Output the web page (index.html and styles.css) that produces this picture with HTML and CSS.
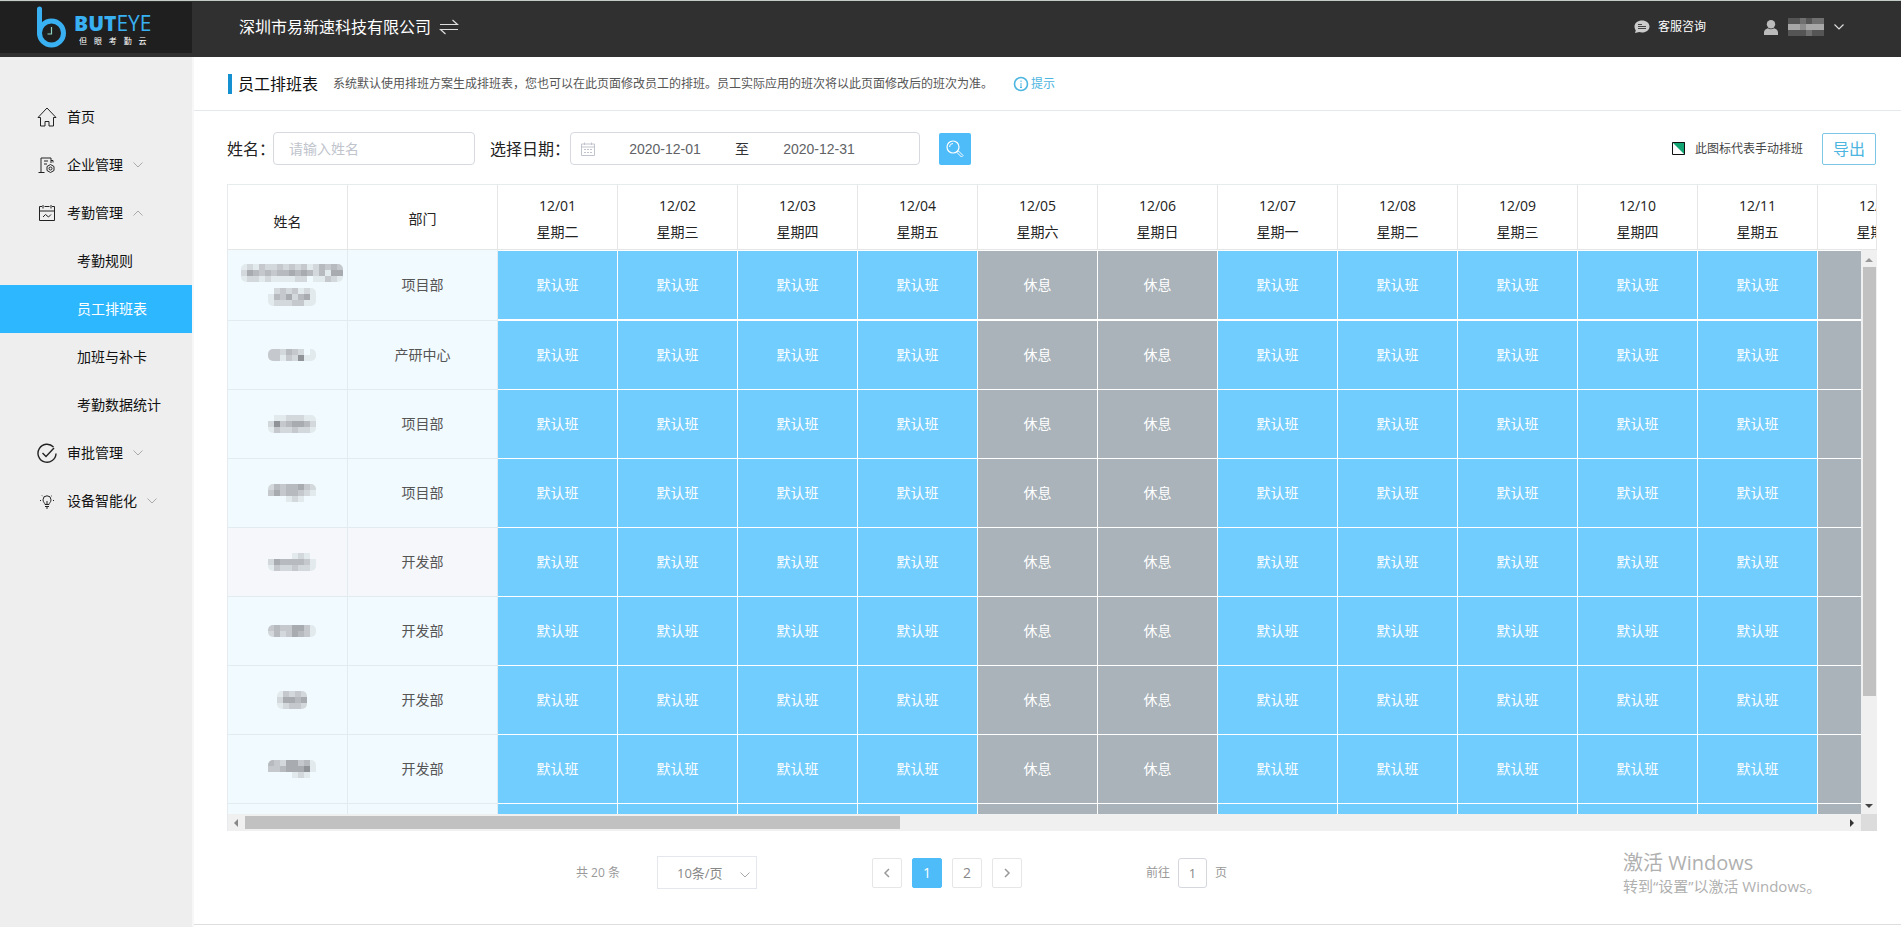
FILE: index.html
```html
<!DOCTYPE html>
<html lang="zh-CN">
<head>
<meta charset="utf-8">
<title>员工排班表</title>
<link rel="stylesheet" href="styles.css">
</head>
<body>
<header class="topbar">
  <div class="brand">
    <svg class="brand-mark" viewBox="0 0 30 42" aria-hidden="true">
      <path d="M2.5 3v24" fill="none" stroke="#38b0f2" stroke-width="5" stroke-linecap="round"/>
      <circle cx="14.500" cy="27" r="12" fill="none" stroke="#38b0f2" stroke-width="5"/>
      <path d="M14.500 21v7h-4" fill="none" stroke="#8fd3c0" stroke-width="1.200"/>
    </svg>
    <div class="brand-text">
      <div class="brand-name"><b>BUT</b>EYE</div>
      <div class="brand-sub"><span>但</span><span>眼</span><span>考</span><span>勤</span><span>云</span></div>
    </div>
  </div>
  <div class="company">
    <span>深圳市易新速科技有限公司</span>
    <button class="plain" aria-label="切换公司">
      <svg width="20" height="16" viewBox="0 0 20 16" fill="none" stroke="#ddd" stroke-width="1.200"><path d="M1 5.500h17.500L13.500 1M19 10.500H1.500l5 4.500"/></svg>
    </button>
  </div>
  <a class="service" href="#">
    <svg width="16" height="14" viewBox="0 0 16 14"><path d="M8 .5c4.300 0 7.500 2.600 7.500 6s-3.200 6-7.500 6c-1 0-2-.1-2.900-.4L1 13l.8-2.600C1 9.300.5 8 .5 6.500c0-3.400 3.200-6 7.500-6z" fill="#ccc"/><path d="M4 4.500h4M4 6.500h8M4 8.500h8" stroke="#444" stroke-width="1"/></svg>
    <span>客服咨询</span>
  </a>
  <button class="plain user" aria-label="用户菜单">
    <svg width="14" height="15" viewBox="0 0 14 15" fill="#bbb"><circle cx="7" cy="4.200" r="4.200"/><path d="M0 15v-2.500C0 10.300 1.700 9 3.800 8.300c2 1.300 4.400 1.300 6.400 0C12.300 9 14 10.300 14 12.500V15z"/></svg>
    <svg class="user-name" width="36" height="18" viewBox="0 0 36 18"><path fill="#555" d="M0 0h36v18H0z"/><path fill="#707070" d="M12 0h6v6h-6zM24 0h12v6H24zM18 12h6v6h-6z"/><path fill="#a8a8a8" d="M0 6h12v6H0zM18 6h18v6H18z"/><path fill="#8c8c8c" d="M12 6h6v6h-6z"/></svg>
    <svg width="10" height="6" viewBox="0 0 10 6" fill="none" stroke="#ddd" stroke-width="1.200"><path d="M.5.5 5 5 9.500.5"/></svg>
  </button>
</header>

<div class="layout">
  <nav class="sidebar">
    <a class="menu" href="#">
      <svg class="menu-icon" viewBox="0 0 20 20"><path d="M1 10.500 10 1l9 9.500h-2.500V19H12v-4.500H8V19H3.500v-8.500z"/></svg>
      <span>首页</span>
    </a>
    <a class="menu" href="#">
      <svg class="menu-icon" viewBox="0 0 20 20"><path d="M1.500 17.500h6M4 17.500V3h10v5M14 5.500h2v2M7 6h4M7 9h3"/><path d="M13.500 9.500l3.500 2v4l-3.500 2-3.500-2v-4z"/><circle cx="13.500" cy="13.500" r="1.500"/></svg>
      <span>企业管理</span>
      <svg class="caret" viewBox="0 0 10 6"><path d="M.5.5 5 5 9.500.5"/></svg>
    </a>
    <a class="menu" href="#">
      <svg class="menu-icon" viewBox="0 0 20 20"><path d="M5 3.500H2.500v14h15v-14H15M7.500 3.500h5M6 2v3.500M14 2v3.500M2.500 8h15M6 14l2.500-2.500 3 2.500 2.500-2.500"/></svg>
      <span>考勤管理</span>
      <svg class="caret" viewBox="0 0 10 6"><path d="M.5 5.500 5 1l4.500 4.500"/></svg>
    </a>
    <a class="menu sub" href="#">考勤规则</a>
    <a class="menu sub active" href="#">员工排班表</a>
    <a class="menu sub" href="#">加班与补卡</a>
    <a class="menu sub" href="#">考勤数据统计</a>
    <a class="menu" href="#">
      <svg class="menu-icon" viewBox="0 0 20 20"><path d="M16.500 4A9 9 0 1 0 19 10.500M5.500 10l3.500 3.500L17 5" stroke-width="1.400"/></svg>
      <span>审批管理</span>
      <svg class="caret" viewBox="0 0 10 6"><path d="M.5.5 5 5 9.500.5"/></svg>
    </a>
    <a class="menu" href="#">
      <svg class="menu-icon" viewBox="0 0 20 20"><path d="M8 13.500c0-1.500-2-2.300-2-4.700a4 4 0 0 1 8 0c0 2.400-2 3.200-2 4.700zM8 15.500h4M9 17h2M3 9.500h1M16 9.500h1M5 4.500l.7.700M15 4.500l-.7.700M10 10v3"/></svg>
      <span>设备智能化</span>
      <svg class="caret" viewBox="0 0 10 6"><path d="M.5.5 5 5 9.500.5"/></svg>
    </a>
  </nav>

  <main class="page">
    <div class="page-head">
      <h1>员工排班表</h1>
      <p>系统默认使用排班方案生成排班表，您也可以在此页面修改员工的排班。员工实际应用的班次将以此页面修改后的班次为准。</p>
      <a class="tip" href="#">
        <svg width="16" height="16" viewBox="0 0 16 16" fill="none" stroke="#4cb5e0"><circle cx="8" cy="8" r="6.500" stroke-width="1.600"/><path d="M8 4.500V6M8 7v4.500M7 11.500h2"/></svg>
        <span>提示</span>
      </a>
    </div>

    <form class="filters">
      <label for="name">姓名：</label>
      <input class="name-input" id="name" type="text" placeholder="请输入姓名">
      <label class="date-label" for="from">选择日期：</label>
      <div class="date-range">
        <svg width="14" height="14" viewBox="0 0 14 14" fill="none" stroke="#c0c4cc"><path d="M.5 2h13v11.500H.5zM.5 5h13M3.500.5V3M10.500.5V3M3 7.500h2M6 7.500h2M9 7.500h2M3 10.500h2M6 10.500h2M9 10.500h2"/></svg>
        <input id="from" type="text" value="2020-12-01">
        <span>至</span>
        <input type="text" value="2020-12-31" aria-label="结束日期">
      </div>
      <button class="search" type="button" aria-label="搜索">
        <svg width="18" height="18" viewBox="0 0 18 18" fill="none" stroke="#fff"><circle cx="7" cy="7" r="6" stroke-width="1.200"/><path d="M3.500 7A3.500 3.500 0 0 1 7 3.500"/><path d="M11 12.500l1.500-1.500 4.500 4.500-1.500 1.500z"/></svg>
      </button>
      <div class="legend">
        <svg width="13" height="13" viewBox="0 0 13 13"><path fill="#fff" d="M0 0h13v13H0z"/><path fill="#12a573" d="M0 0h13v13z"/><path fill="none" stroke="#111" d="M.5.5h12v12H.5z"/></svg>
        <span>此图标代表手动排班</span>
      </div>
      <button class="export" type="button">导出</button>
    </form>

    <section class="grid">
      <div class="grid-head"><table class="schedule"><thead><tr id="days"></tr></thead></table></div>
      <div class="grid-body"><table class="schedule"><tbody id="rows"></tbody></table></div>
      <div class="vbar">
        <svg width="8" height="5" viewBox="0 0 8 5"><path fill="#999" d="M0 5l4-4 4 4z"/></svg>
        <div class="vtrack"><div class="vthumb"></div></div>
        <svg width="8" height="5" viewBox="0 0 8 5"><path fill="#444" d="M0 0l4 4 4-4z"/></svg>
      </div>
      <div class="hbar">
        <svg width="5" height="8" viewBox="0 0 5 8"><path fill="#888" d="M5 0L1 4l4 4z"/></svg>
        <div class="htrack"><div class="hthumb"></div></div>
        <svg width="5" height="8" viewBox="0 0 5 8"><path fill="#333" d="M0 0l4 4-4 4z"/></svg>
      </div>
      <div class="corner"></div>
    </section>

    <footer class="pager">
      <span class="total">共 20 条</span>
      <div class="size">
        <select aria-label="每页条数"><option>10条/页</option></select>
        <svg class="caret" viewBox="0 0 10 6"><path d="M.5.5 5 5 9.500.5"/></svg>
      </div>
      <div class="pages">
        <button aria-label="上一页"><svg width="8" height="10" viewBox="0 0 8 10"><path d="M6 1 2 5l4 4"/></svg></button>
        <button class="current">1</button>
        <button>2</button>
        <button aria-label="下一页"><svg width="8" height="10" viewBox="0 0 8 10"><path d="M2 1l4 4-4 4"/></svg></button>
      </div>
      <div class="jump">
        <label for="jump">前往</label>
        <input id="jump" type="text" value="1">
        <span>页</span>
      </div>
    </footer>
  </main>
</div>

<aside class="watermark">
  <div class="watermark-title">激活 Windows</div>
  <div>转到“设置”以激活 Windows。</div>
</aside>
<script src="schedule.js"></script>
</body>
</html>
```
FILE: styles.css
```css
* { box-sizing: border-box; }

body {
  margin: 0;
  height: 100vh;
  display: flex;
  flex-direction: column;
  overflow: hidden;
  background: #fff;
  color: #303133;
  font: 14px/20px "Open Sans", "Noto Sans CJK SC", sans-serif;
}

a { color: inherit; text-decoration: none; }
svg { flex: none; }
button, input, select { font: inherit; margin: 0; }
input { min-width: 0; outline: none; }

.plain {
  display: flex;
  align-items: center;
  padding: 0;
  border: 0;
  background: none;
}

/* top bar */
.topbar {
  display: flex;
  align-items: center;
  height: 57px;
  padding: 0 57px 4px 0;
  border-top: 1px solid #c4ccc8;
  background: #303030;
  color: #fff;
}

.brand {
  display: flex;
  align-items: center;
  gap: 7px;
  width: 192px;
  height: 51px;
  padding-left: 37px;
  background: #1f1f1f;
}

.brand-mark { width: 30px; height: 42px; }
.brand-text { display: flex; flex-direction: column; gap: 2px; padding-top: 4px; }
.brand-name { font: 21px/22px "Open Sans", sans-serif; color: #38b0f2; }
.brand-name b { font-weight: 800; }
.brand-sub { display: flex; justify-content: space-between; padding: 0 5px; font-size: 8px; line-height: 10px; }

.company {
  display: flex;
  align-items: center;
  gap: 8px;
  margin-right: auto;
  padding-left: 47px;
  font-size: 16px;
}

.service { display: flex; align-items: center; gap: 8px; font-size: 12px; }
.user { gap: 10px; margin-left: 58px; }

/* sidebar */
.layout { display: flex; flex: 1; min-height: 0; }

.sidebar {
  width: 194px;
  flex: none;
  padding-top: 36px;
  background: #eee;
  border-right: 2px solid #f7f7f7;
}

.menu {
  display: flex;
  align-items: center;
  height: 48px;
  padding-left: 37px;
  color: #111;
}

.menu span { margin: 0 10px; }
.sub { padding-left: 77px; }
.active { background: #2db7ff; color: #fff; }
.menu-icon { width: 20px; height: 20px; fill: none; stroke: #222; }
.caret { width: 10px; height: 6px; fill: none; stroke: #aaa; }

/* page */
.page {
  display: flex;
  flex-direction: column;
  flex: 1;
  min-width: 0;
  margin-bottom: 2px;
  border-bottom: 1px solid #ddd;
}

.page-head {
  display: flex;
  align-items: center;
  height: 54px;
  padding-left: 34px;
  border-bottom: 1px solid #e4e9ec;
}

h1 {
  margin: 0;
  padding-left: 6px;
  border-left: 4px solid #1590d0;
  font-size: 16px;
  font-weight: 400;
  line-height: 20px;
  color: #111;
}

.page-head p { margin: 0 20px 0 15px; font-size: 12px; color: #555; }
.tip { display: flex; align-items: center; gap: 2px; font-size: 12px; color: #4cb5e0; }

.filters {
  display: flex;
  align-items: center;
  height: 73px;
  padding: 2px 25px 0 33px;
}

.filters label { font-size: 16px; color: #222; }

.name-input, .date-range {
  height: 33px;
  border: 1px solid #d6d9e0;
  border-radius: 4px;
  background: #fff;
}

.name-input { width: 202px; padding: 0 15px; margin-left: -2px; }
.name-input::placeholder { color: #c0c4cc; }
.date-label { margin-left: 15px; }

.date-range {
  display: flex;
  align-items: center;
  width: 350px;
  padding: 0 30px 0 10px;
}

.date-range input {
  flex: 1;
  border: 0;
  padding: 0;
  text-align: center;
  font-family: "Liberation Sans", sans-serif;
  color: #606266;
}

.search {
  display: flex;
  align-items: center;
  justify-content: center;
  width: 32px;
  height: 32px;
  margin-left: 19px;
  padding: 0;
  border: 0;
  border-radius: 2px;
  background: #4ebcf8;
}

.legend {
  display: flex;
  align-items: center;
  gap: 10px;
  margin: 0 19px 0 auto;
  font-size: 12px;
  color: #444;
}

.export {
  width: 54px;
  height: 32px;
  padding: 0;
  border: 1px solid #7cc6e8;
  border-radius: 2px;
  background: #fff;
  font-size: 16px;
  color: #4cb5e0;
}

/* schedule grid */
.grid {
  display: grid;
  grid-template-columns: 1fr 16px;
  grid-template-rows: auto 1fr 17px;
  flex: 1;
  min-height: 0;
  margin: 0 24px 0 33px;
  border: 1px solid #e6ebee;
  border-width: 1px 0 0 1px;
}

.grid-head { grid-column: 1 / 3; overflow: hidden; border-right: 1px solid #e6e6e6; }
.grid-body { overflow: hidden; }

.schedule { width: 1710px; table-layout: fixed; border-collapse: separate; border-spacing: 0; }

.schedule th, .schedule td {
  width: 120px;
  height: 69px;
  padding: 0;
  border: 1px solid #e2ecf0;
  border-width: 0 1px 1px 0;
  text-align: center;
  vertical-align: middle;
  font-weight: 400;
}

.schedule th { height: 65px; padding-top: 4px; line-height: 26px; color: #222; border-color: #e6e6e6; }
.schedule th:first-child { padding-top: 10px; }
.schedule .dept { width: 150px; }
.schedule td { background: #f1faff; color: #555; }
.schedule td:first-child { padding-left: 8px; }
.schedule .hovered td { background: #f5f7fa; }
.schedule td.work, .schedule .hovered td.work { background: #72cdff; border-color: #fff; color: #fff; }
.schedule td.rest, .schedule .hovered td.rest { background: #a9b3b9; border-color: #fff; color: #fff; }
.schedule tr:first-child td { height: 71px; }
.schedule tr:first-child .work, .schedule tr:first-child .rest { border-top: 1px solid #fff; border-bottom-width: 2px; }
.mask { display: block; margin: 0 auto; border-radius: 5px; }
.mask + .mask { margin-top: 6px; }

.vbar, .hbar { display: flex; align-items: center; background: #f0f0f0; }
.vbar { flex-direction: column; padding: 7px 0 5px; }
.vtrack { flex: 1; width: 13px; margin: 5px 0 7px; }
.vthumb { height: 81%; background: #c1c1c1; }
.hbar { padding: 0 6px 0 5px; }
.htrack { flex: 1; height: 13px; margin: 0 7px; }
.hthumb { width: 41%; height: 13px; background: #c1c1c1; }
.corner { background: #dcdcdc; }

/* pagination */
.pager {
  display: flex;
  align-items: center;
  height: 93px;
  padding: 0 0 10px 382px;
  font-size: 12px;
  color: #999;
}

.size { position: relative; margin-left: 37px; }

.size select {
  appearance: none;
  display: block;
  width: 100px;
  height: 33px;
  padding: 0 19px;
  border: 1px solid #e4e7ed;
  border-radius: 0;
  background: #fff;
  font-size: 13px;
  color: #888;
}

.size .caret { position: absolute; right: 7px; top: 16px; }

.pages { display: flex; gap: 10px; margin-left: 115px; }

.pages button {
  display: flex;
  align-items: center;
  justify-content: center;
  width: 30px;
  height: 30px;
  padding: 0;
  border: 1px solid #e6e6e6;
  border-radius: 2px;
  background: #fff;
  font-size: 14px;
  color: #888;
}

.pages svg { fill: none; stroke: #999; stroke-width: 1.5; }
.pages .current { border-color: #4ebcf8; background: #4ebcf8; color: #fff; }

.jump { display: flex; align-items: center; gap: 8px; margin-left: 124px; }

.jump input {
  width: 29px;
  height: 30px;
  padding: 0;
  border: 1px solid #d4d7de;
  border-radius: 3px;
  text-align: center;
  font-size: 13px;
  color: #888;
}

.watermark {
  position: absolute;
  right: 78px;
  bottom: 31px;
  width: 200px;
  white-space: nowrap;
  font-size: 15px;
  color: #b0b0b0;
  pointer-events: none;
}

.watermark-title { font-size: 20px; line-height: 27px; }
```
FILE: schedule.js
```javascript
const weekdays = ["二", "三", "四", "五", "六", "日", "一"];
const dayCount = 12;
const isRest = (i) => i % 7 === 4 || i % 7 === 5;

// Each name is hidden by a mosaic; digits run from 0 (clear) to 6 (darkest).
const staff = [
  { dept: "项目部", masks: ["12132232323124343/25434344545424155/12212111122011321", "02323121/14352451/12223311"] },
  { dept: "产研中心", masks: ["33243201/33132611"] },
  { dept: "项目部", masks: ["01122211/26345542/13223221"] },
  { dept: "项目部", masks: ["24344532/35344321/00012100"] },
  { dept: "开发部", hovered: true, masks: ["00001210/25444431/13223221"] },
  { dept: "开发部", masks: ["34335531/24235431"] },
  { dept: "开发部", masks: ["13232/25545/12332"] },
  { dept: "开发部", masks: ["43255341/33455561/00001210"] },
  { dept: "开发部", masks: [] },
];

const shades = ["none", "#e3eaee", "#d3d8dc", "#c5c9cd", "#b7babe", "#a8abb0", "#909398"];

function mask(pattern) {
  const lines = pattern.split("/");
  const w = lines[0].length * 6;
  const h = lines.length * 6;
  const cells = lines.map((line, y) => [...line].map((c, x) =>
    `<path fill="${shades[c]}" d="M${x * 6} ${y * 6}h6v6h-6z"/>`).join("")).join("");
  return `<svg class="mask" width="${w}" height="${h}" viewBox="0 0 ${w} ${h}">${cells}</svg>`;
}

let head = '<th>姓名</th><th class="dept">部门</th>';
for (let i = 0; i < dayCount; i++) {
  head += `<th>12/${String(i + 1).padStart(2, "0")}<br>星期${weekdays[i % 7]}</th>`;
}
document.getElementById("days").innerHTML = head;

document.getElementById("rows").innerHTML = staff.map((p) => {
  let cells = `<td>${p.masks.map(mask).join("")}</td><td class="dept">${p.dept}</td>`;
  for (let i = 0; i < dayCount; i++) {
    cells += isRest(i) ? '<td class="rest">休息</td>' : '<td class="work">默认班</td>';
  }
  return `<tr class="${p.hovered ? "hovered" : ""}">${cells}</tr>`;
}).join("");
```
